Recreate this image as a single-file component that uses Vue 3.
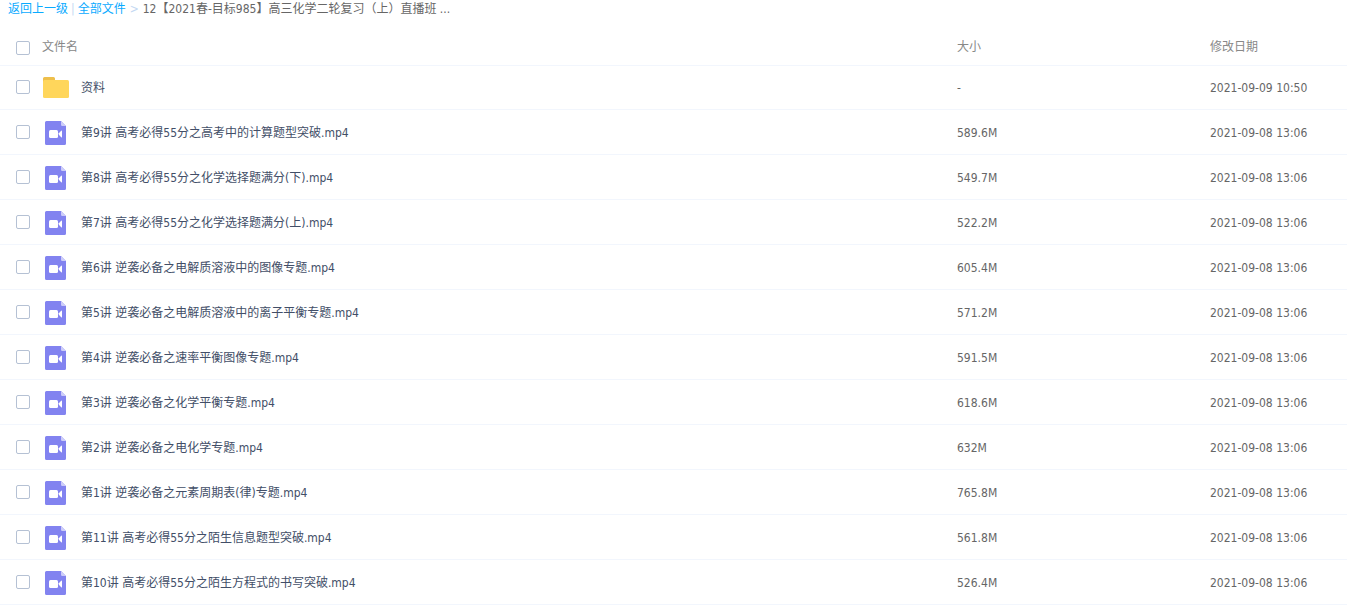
<script setup>
import { ref, computed } from 'vue'

const video = (id, name, size) => ({ id, name, size, date: '2021-09-08 13:06', type: 'video' })

const files = [
  { id: 'f0', name: '资料', size: '-', date: '2021-09-09 10:50', type: 'folder' },
  video('f9', '第9讲 高考必得55分之高考中的计算题型突破.mp4', '589.6M'),
  video('f8', '第8讲 高考必得55分之化学选择题满分(下).mp4', '549.7M'),
  video('f7', '第7讲 高考必得55分之化学选择题满分(上).mp4', '522.2M'),
  video('f6', '第6讲 逆袭必备之电解质溶液中的图像专题.mp4', '605.4M'),
  video('f5', '第5讲 逆袭必备之电解质溶液中的离子平衡专题.mp4', '571.2M'),
  video('f4', '第4讲 逆袭必备之速率平衡图像专题.mp4', '591.5M'),
  video('f3', '第3讲 逆袭必备之化学平衡专题.mp4', '618.6M'),
  video('f2', '第2讲 逆袭必备之电化学专题.mp4', '632M'),
  video('f1', '第1讲 逆袭必备之元素周期表(律)专题.mp4', '765.8M'),
  video('f11', '第11讲 高考必得55分之陌生信息题型突破.mp4', '561.8M'),
  video('f10', '第10讲 高考必得55分之陌生方程式的书写突破.mp4', '526.4M'),
]

const selected = ref([])
const allSelected = computed({
  get: () => selected.value.length === files.length,
  set: (on) => { selected.value = on ? files.map((f) => f.id) : [] },
})
</script>

<template>
  <main class="page">
    <nav class="crumbs">
      <a href="#up">返回上一级</a>
      <span class="bar">|</span>
      <a href="#all">全部文件</a>
      <span class="arrow">&gt;</span>
      <span class="current">12【2021春-目标985】高三化学二轮复习（上）直播班 ...</span>
    </nav>

    <table class="files">
      <colgroup>
        <col class="col-check">
        <col>
        <col class="col-size">
        <col class="col-date">
      </colgroup>
      <thead>
        <tr>
          <th class="check"><input id="check-all" v-model="allSelected" type="checkbox"></th>
          <th scope="col"><label for="check-all">文件名</label></th>
          <th scope="col">大小</th>
          <th scope="col">修改日期</th>
        </tr>
      </thead>
      <tbody>
        <tr v-for="file in files" :key="file.id" :class="file.type">
          <td class="check"><input :id="file.id" v-model="selected" :value="file.id" type="checkbox"></td>
          <td>
            <label class="name" :for="file.id">
              <svg v-if="file.type === 'folder'" class="icon" viewBox="0 0 28 26" aria-hidden="true">
                <path d="M1 9V3.5A1.5 1.5 0 0 1 2.5 2H11.5A1.5 1.5 0 0 1 13 3.5V9Z" fill="#eebf4b" />
                <rect x="1" y="5" width="26" height="18" rx="1.5" fill="#ffd65b" />
              </svg>
              <svg v-else class="icon" viewBox="0 0 28 26" aria-hidden="true">
                <path d="M4.5 1H19L24 6V23.5A1.5 1.5 0 0 1 22.5 25H4.500A1.500 1.500 0 0 1 3 23.500V2.500A1.500 1.500 0 0 1 4.500 1Z" fill="#8283f0" />
                <path d="M19 1L24 6H20.200A1.200 1.200 0 0 1 19 4.800Z" fill="#cdcdf9" />
                <rect x="7" y="10" width="9" height="8" rx="1.500" fill="#fff" />
                <path d="M16.800 13.200L19.200 10.800Q20 10.200 20 11.200V16.800Q20 17.800 19.200 17.200L16.800 14.800Z" fill="#fff" />
              </svg>
              <span>{{ file.name }}</span>
            </label>
          </td>
          <td>{{ file.size }}</td>
          <td>{{ file.date }}</td>
        </tr>
      </tbody>
    </table>
  </main>
</template>

<style>
body {
  background: #fff;
}
</style>

<style scoped>
.page {
  font: 12px/18px "DejaVu Sans Condensed", "Noto Sans CJK SC", sans-serif;
  color: #666;
}

.crumbs {
  display: flex;
  height: 28px;
  padding-left: 8px;
  white-space: nowrap;
}

.crumbs a {
  color: #09aaff;
  text-decoration: none;
}

.bar,
.arrow {
  color: #c4d8f2;
}

.bar {
  padding: 0 3px;
}

.arrow {
  padding: 0 4px;
}

.files {
  width: 100%;
  table-layout: fixed;
  border-collapse: separate;
  border-spacing: 0;
}

.col-check {
  width: 42px;
}

.col-size {
  width: 253px;
}

.col-date {
  width: 137px;
}

th,
td {
  box-sizing: border-box;
  height: 45px;
  padding: 2px 0 0;
  border-bottom: 1px solid #f2f6fd;
  text-align: left;
  vertical-align: middle;
  white-space: nowrap;
}

th {
  height: 38px;
  padding: 0;
  font-weight: normal;
  color: #888;
}

.folder td {
  height: 44px;
  padding: 0;
}

td.check,
.folder .check {
  padding: 0 0 0 16px;
}

.folder .check {
  padding-bottom: 2px;
}

th.check {
  padding: 2px 0 0 16px;
}

input {
  display: block;
  box-sizing: border-box;
  width: 14px;
  height: 14px;
  margin: 0;
  appearance: none;
  border: 1px solid #b5c1d4;
  border-radius: 2px;
  background: #fff;
}

input:checked {
  border-color: #09aaff;
  background: #09aaff;
}

.name {
  display: flex;
  align-items: center;
  gap: 11px;
  color: #424e67;
}

.icon {
  flex: none;
  width: 28px;
  height: 26px;
}
</style>
